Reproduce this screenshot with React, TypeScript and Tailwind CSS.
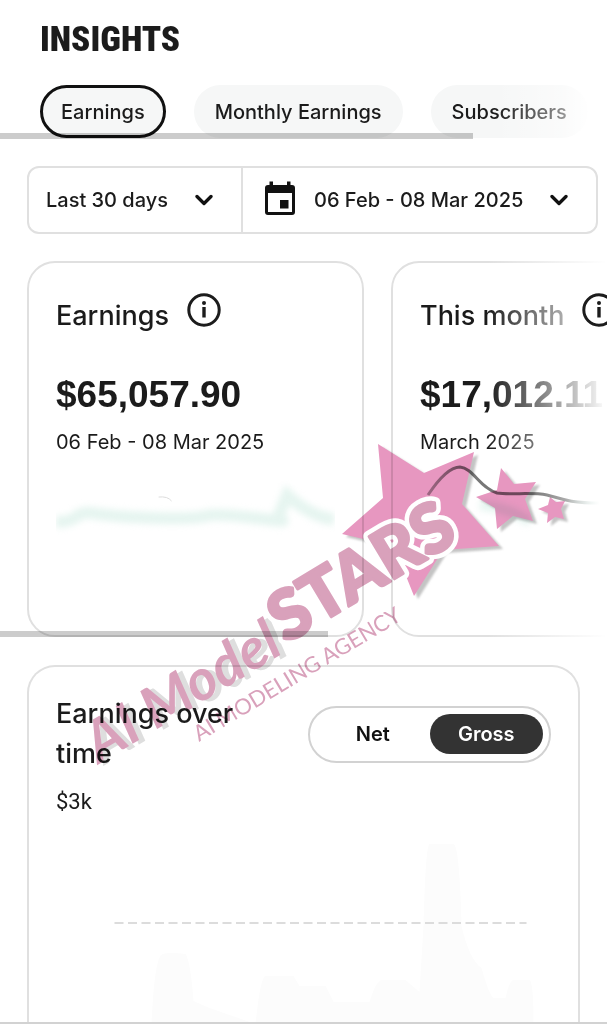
import { useState } from "react";
import clsx from "clsx";

const tabs = ["Earnings", "Monthly Earnings", "Subscribers"];
const modes = ["Net", "Gross"];

function Chevron() {
  return (
    <svg viewBox="0 0 18 12" className="h-3 w-[18px] shrink-0" fill="none" stroke="#111" strokeWidth="3.300" strokeLinecap="round" strokeLinejoin="round">
      <path d="M2 2.500l7 7 7-7" />
    </svg>
  );
}

function CalendarIcon() {
  return (
    <svg viewBox="0 0 32 36" className="mb-1 h-9 w-8 shrink-0" fill="#111">
      <path fillRule="evenodd" d="M5.500 1.500h3.500v3.500h14V1.500h3.500V5H28a3 3 0 0 1 3 3v24a3 3 0 0 1-3 3H4a3 3 0 0 1-3-3V8a3 3 0 0 1 3-3h1.500zM4 13v19h24V13z" />
      <rect x="16" y="20" width="8.500" height="8.500" />
    </svg>
  );
}

function InfoButton({ label }: { label: string }) {
  return (
    <button aria-label={label} className="relative z-10 -mt-3 shrink-0">
      <svg viewBox="0 0 34 34" className="size-[34px]" fill="none" stroke="#1c1c1c" strokeWidth="3">
        <circle cx="17" cy="17" r="15.200" />
        <path d="M17 14v10.500" strokeWidth="3.400" />
        <circle cx="17" cy="10" r="2" fill="#1c1c1c" stroke="none" />
      </svg>
    </button>
  );
}

interface CardProps {
  title: string;
  amount: string;
  period: string;
  children: React.ReactNode;
}

function StatCard({ title, amount, period, children }: CardProps) {
  return (
    <article className="relative h-[376px] w-[337px] shrink-0 rounded-[28px] border-2 border-[#e0e0e0] px-[27px] pt-[31px]">
      <div className="flex h-11 items-center gap-[18px]">
        <h2 className="text-[27px] leading-10 font-medium whitespace-nowrap">{title}</h2>
        <InfoButton label={"About " + title} />
      </div>
      <p className="mt-[34px] font-['Liberation_Sans',sans-serif] text-[37px] leading-[46px] font-bold">{amount}</p>
      <p className="mt-[10px] text-[20px] leading-7">{period}</p>
      {children}
    </article>
  );
}

function Watermark() {
  return (
    <svg viewBox="40 400 540 460" className="pointer-events-none absolute top-[400px] left-10 z-20 h-[460px] w-[540px] mix-blend-multiply" aria-hidden="true">
      <defs>
        <g id="stars">
          <path d="M378 444L424 473 474 452 462 504 499 546 443 550 414 596 394 546 342 534 383 498z" />
          <path d="M501 468L514 484 536 482 525 499 533 521 513 516 497 529 495 508 476 497 497 490z" />
          <path d="M550 497L556 502 565 501 561 509 564 519 555 517 547 523 548 513 538 509 548 505z" />
        </g>
      </defs>
      <use href="#stars" x="4" y="3" fill="#c4c4c4" className="blur-[1px]" />
      <use href="#stars" fill="#e797c0" />
      <g className="font-['Lato',sans-serif]" fill="#d9a1bb">
        <g transform="translate(99 764) rotate(-31)" fontSize="57" fontWeight="700" fontStyle="italic">
          <text x="5" y="4" fill="#dedede">AI Model</text>
          <text>AI Model</text>
        </g>
        <g transform="translate(286 644) rotate(-31)" fontSize="68" fontWeight="900" strokeLinejoin="round">
          <text stroke="#fff" strokeWidth="12">STARS</text>
          <text stroke="#d9a1bb" strokeWidth="3">STARS</text>
        </g>
        <g transform="translate(199 742) rotate(-31)">
          <text fontSize="22">AI MODELING AGENCY</text>
        </g>
      </g>
    </svg>
  );
}

export default function App() {
  const [tab, setTab] = useState("Earnings");
  const [mode, setMode] = useState("Gross");

  return (
    <main className="relative flex min-h-screen flex-col overflow-hidden border-b-2 border-[#d2d2d2] bg-white font-['Inter',sans-serif] text-[#1b1b1b]">
      <h1 className="mt-5 ml-10 font-['Roboto_Condensed','Roboto',sans-serif] text-[35px] leading-10 font-black">INSIGHTS</h1>

      <nav className="relative mt-[25px] flex gap-7 overflow-hidden pb-[1px] pl-10">
        {tabs.map((t) => (
          <button
            key={t}
            onClick={() => setTab(t)}
            className={clsx(
              "h-[53px] shrink-0 rounded-full border-[3px] bg-[#f6f7f7] px-[18px] text-[20px] font-medium",
              t === tab ? "border-[#111]" : "border-transparent"
            )}
          >
            {t}
          </button>
        ))}
        <div className="pointer-events-none absolute inset-y-0 right-0 w-28 bg-linear-to-r from-white/0 via-white/50 via-60% to-white to-85%" />
        <div className="pointer-events-none absolute bottom-0 left-0 h-[6px] w-[78%] bg-black/20" />
      </nav>

      <div className="mt-[27px] mr-[9px] ml-[27px] flex h-[68px] rounded-xl border-2 border-[#e0e0e0] text-[20px] font-medium">
        <label className="relative flex w-[214px] items-center border-r-2 border-[#e0e0e0]">
          <select aria-label="Period" className="h-full w-full appearance-none bg-transparent pl-[17px] outline-none">
            <option>Last 30 days</option>
          </select>
          <span className="pointer-events-none absolute right-7">
            <Chevron />
          </span>
        </label>
        <button className="flex flex-1 items-center gap-[18px] pr-7 pl-[21px] whitespace-nowrap">
          <CalendarIcon />
          <span className="flex-1 text-left">06 Feb - 08 Mar 2025</span>
          <Chevron />
        </button>
      </div>

      <section className="relative mt-[27px] flex gap-[27px] overflow-hidden pl-[27px]">
        <StatCard title="Earnings" amount="$65,057.90" period="06 Feb - 08 Mar 2025">
          <svg viewBox="0 0 280 60" className="mt-6 h-[60px] w-full" fill="none">
            <path d="M0 42Q14 42 20 37T36 33Q60 37 100 38T150 36 200 38 222 39L232 15Q240 23 252 30T279 40" stroke="#e6f5f0" strokeWidth="12" className="blur-[3px]" />
            <path d="M103 17Q112 16 116 21" stroke="#ddd" />
          </svg>
        </StatCard>
        <StatCard title="This month" amount="$17,012.11" period="March 2025">
          <svg viewBox="0 0 186 80" className="relative z-10 mt-1 h-20 w-[186px]" fill="none">
            <defs>
              <linearGradient id="fade">
                <stop offset="0" stopColor="#777" stopOpacity="0.6" />
                <stop offset="0.2" stopColor="#777" />
                <stop offset="0.6" stopColor="#777" />
                <stop offset="0.8" stopColor="#aaa" />
                <stop offset="1" stopColor="#d5ebe4" stopOpacity="0" />
              </linearGradient>
            </defs>
            <path d="M60 45Q90 48 110 62" stroke="#e6f5f0" strokeWidth="10" className="blur-[3px]" />
            <path d="M8 35C20 17 30 7 40 7C53 8 60 28 77 33C92 35 112 32 127 35C140 38 147 43 180 43" stroke="url(#fade)" strokeWidth="3" />
          </svg>
        </StatCard>
        <div className="pointer-events-none absolute inset-y-0 right-0 w-[120px] bg-linear-to-r from-white/0 to-white" />
        <div className="pointer-events-none absolute bottom-0 left-0 h-[6px] w-[54%] bg-black/20" />
      </section>

      <section className="mt-7 mr-[27px] ml-[27px] flex flex-1 flex-col rounded-t-[28px] border-2 border-b-0 border-[#e0e0e0] px-[27px] pt-[27px]">
        <div className="flex items-center justify-between">
          <h2 className="w-[200px] text-[27px] leading-10 font-medium">Earnings over time</h2>
          <div className="flex h-[57px] w-[243px] items-center rounded-full border-2 border-[#d2d2d2] px-[6px] text-[20px] font-semibold">
            {modes.map((m) => (
              <button
                key={m}
                aria-pressed={m === mode}
                onClick={() => setMode(m)}
                className={clsx("h-10 flex-1 rounded-full", m === mode ? "bg-[#333] text-white" : "text-[#111]")}
              >
                {m}
              </button>
            ))}
          </div>
        </div>
        <p className="mt-[14px] font-['Roboto',sans-serif] text-[22px] leading-7">$3k</p>
        <svg viewBox="0 2 500 204" className="mt-auto h-[204px] w-full" fill="#fcfcfc" preserveAspectRatio="xMidYMax slice">
          <path d="M98 208Q101 140 109 138T132 138Q137 145 140 185L156 192 202 208Q207 160 212 160H240L246 170H272L280 186H316Q322 166 328 164H352L366 176 370 110Q372 30 376 28H400Q406 30 408 110 416 144 428 152 436 180 440 182H452Q456 162 462 164H476Q480 166 480 208z" />
          <path d="M61 107H473" stroke="#dcdcdc" strokeWidth="2" strokeDasharray="9 4.500" />
        </svg>
      </section>

      <Watermark />
    </main>
  );
}
